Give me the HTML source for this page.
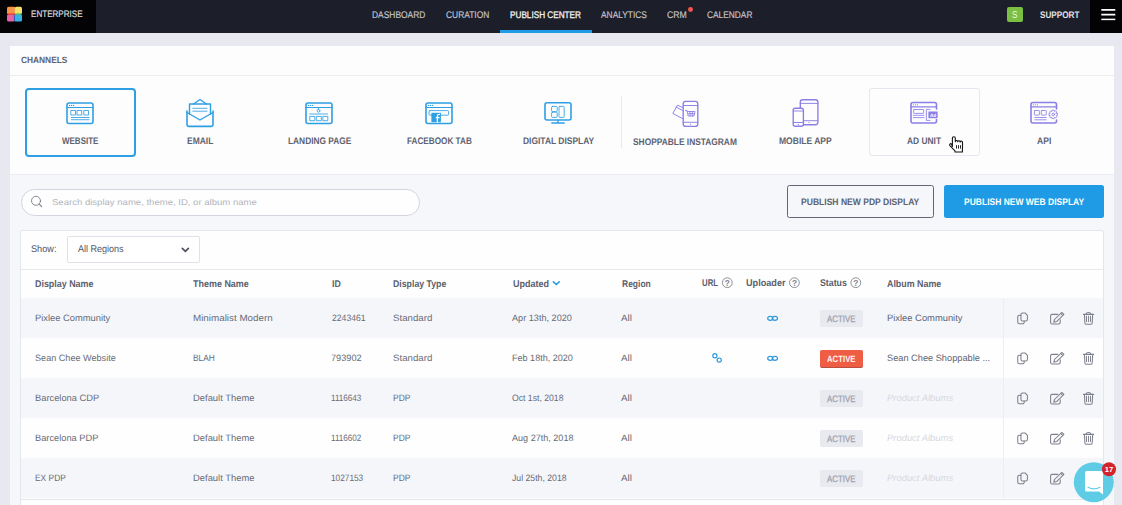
<!DOCTYPE html>
<html><head><meta charset="utf-8">
<style>
*{margin:0;padding:0;box-sizing:border-box}
html,body{width:1122px;height:505px;overflow:hidden;background:#e8e9f0;font-family:"Liberation Sans",sans-serif;color:#5b6070}
.a{position:absolute}
.t{white-space:nowrap;transform-origin:0 0;text-rendering:geometricPrecision}
.row{left:21px;width:1082px;height:40px}
.badge{width:43px;height:17px;border-radius:2px}
</style></head><body>
<svg width="0" height="0" style="position:absolute">
<defs>
<g id="acts" fill="none" stroke="#7d808b" stroke-width="1.05" stroke-linejoin="round" stroke-linecap="round">
<path d="M1022.45 312.9 H1025 L1027.4 315.3 V319.4 a1.5 1.5 0 0 1 -1.5 1.5 H1022.45 a1.5 1.5 0 0 1 -1.5 -1.5 V314.4 a1.5 1.5 0 0 1 1.5 -1.5 Z"/>
<path d="M1020.95 315.2 H1019.25 a1.5 1.5 0 0 0 -1.5 1.5 V322.3 a1.5 1.5 0 0 0 1.5 1.5 H1022.7 a1.5 1.5 0 0 0 1.5 -1.5 V320.9"/>
<path d="M1057.7 314.35 H1052.1 a1.5 1.5 0 0 0 -1.5 1.5 V322.5 a1.5 1.5 0 0 0 1.5 1.5 H1058.7 a1.5 1.5 0 0 0 1.5 -1.5 V319.7"/>
<path d="M1053.8 322.2 L1054.5 319.5 L1061.8 312.3 L1063.9 314.4 L1056.6 321.6 Z M1060.7 313.5 L1062.8 315.6"/>
<path d="M1083.4 314.35 H1093.7"/>
<path d="M1086 314.2 Q1086.4 312.4 1088.5 312.4 Q1090.6 312.4 1091 314.2"/>
<path d="M1084.45 314.5 L1084.9 323 a1.2 1.2 0 0 0 1.2 1.2 H1091 a1.2 1.2 0 0 0 1.2 -1.2 L1092.65 314.5"/>
<path d="M1086.5 316.3 V321.6 M1088.5 316.3 V321.6 M1090.5 316.3 V321.6" stroke-width="0.95"/>
</g>
</defs></svg>
<div class="a" style="left:0;top:0;width:1122px;height:33px;background:#1c1e2a"></div>
<div class="a" style="left:0;top:0;width:96px;height:33px;background:#030305"></div>
<div class="a" style="left:1090px;top:0;width:32px;height:33px;background:#030305"></div>
<svg class="a" style="left:0;top:0" width="30" height="30" viewBox="0 0 30 30">
<rect x="7" y="6.8" width="8.6" height="7.6" rx="1.6" fill="#f59447"/>
<rect x="14.8" y="6.8" width="7.2" height="7.4" rx="1.6" fill="#f5e06e"/>
<rect x="7" y="14.2" width="7.8" height="7.4" rx="1.6" fill="#e664a6"/>
<rect x="14.2" y="14" width="7.8" height="7.6" rx="1.6" fill="#35b3e6"/>
<rect x="8" y="13.4" width="6.6" height="1.5" fill="#e8453f"/>
<rect x="15.6" y="13.4" width="5.6" height="1.4" fill="#58bd5e"/>
<rect x="13.9" y="15.2" width="1.1" height="5.6" fill="#3a55b5"/>
</svg>
<div class="a t" style="left:30.70px;top:10px;font-size:9.36px;line-height:9.36px;color:#dadade;transform:scaleX(0.8644);-webkit-text-stroke:0.2px #dadade">ENTERPRISE</div>
<div class="a t" style="left:371.90px;top:11px;font-size:9.64px;line-height:9.64px;color:#c6c7cd;transform:scaleX(0.8744);-webkit-text-stroke:0.15px #c6c7cd">DASHBOARD</div>
<div class="a t" style="left:445.90px;top:11px;font-size:9.64px;line-height:9.64px;color:#c6c7cd;transform:scaleX(0.8725);-webkit-text-stroke:0.15px #c6c7cd">CURATION</div>
<div class="a t" style="left:510.00px;top:11px;font-size:9.50px;line-height:9.50px;color:#f2f2f4;transform:scaleX(0.8621);-webkit-text-stroke:0.3px #f2f2f4">PUBLISH CENTER</div>
<div class="a" style="left:499.5px;top:29.5px;width:92.5px;height:3.5px;background:#1e9be4"></div>
<div class="a t" style="left:601.00px;top:11px;font-size:9.64px;line-height:9.64px;color:#c6c7cd;transform:scaleX(0.8703);-webkit-text-stroke:0.15px #c6c7cd">ANALYTICS</div>
<div class="a t" style="left:667.40px;top:11px;font-size:9.64px;line-height:9.64px;color:#c6c7cd;transform:scaleX(0.9066);-webkit-text-stroke:0.15px #c6c7cd">CRM</div>
<div class="a" style="left:688px;top:7px;width:4.8px;height:4.8px;border-radius:50%;background:#f0564a"></div>
<div class="a t" style="left:707.00px;top:11px;font-size:9.64px;line-height:9.64px;color:#c6c7cd;transform:scaleX(0.8667);-webkit-text-stroke:0.15px #c6c7cd">CALENDAR</div>
<div class="a" style="left:1007px;top:7px;width:16px;height:15px;background:#7bc043;border-radius:2px"></div>
<div class="a t" style="left:1012.30px;top:11px;font-size:10.06px;line-height:10.06px;color:#eef7e0;transform:scaleX(0.8048);">S</div>
<div class="a t" style="left:1039.70px;top:11px;font-size:9.50px;line-height:9.50px;font-weight:bold;color:#e2e2e6;transform:scaleX(0.8580);">SUPPORT</div>
<svg class="a" style="left:1100px;top:8px" width="18" height="14" viewBox="1100 8 18 14"><g stroke="#fff" stroke-width="1.7"><path d="M1101.3 9.9 H1115.3 M1101.3 14.7 H1115.3"/><path d="M1101.3 19.4 H1115.3" stroke-width="1.5"/></g></svg>
<div class="a" style="left:10px;top:46px;width:1104px;height:128px;background:#fdfdfd"></div>
<div class="a t" style="left:21.00px;top:56px;font-size:9.08px;line-height:9.08px;font-weight:bold;color:#5d6270;transform:scaleX(0.9198);">CHANNELS</div>
<div class="a" style="left:10px;top:75px;width:1104px;height:1px;background:#ececf1"></div>
<div class="a" style="left:25px;top:88px;width:111px;height:69px;border:2px solid #2d9fe2;border-radius:4px"></div>
<div class="a" style="left:869px;top:88px;width:111px;height:68px;border:1px solid #e5e6ee;border-radius:3px"></div>
<div class="a" style="left:621px;top:96px;width:1px;height:52px;background:#e8e9ef"></div>
<div class="a t" style="left:62.00px;top:137px;font-size:9.50px;line-height:9.50px;font-weight:bold;color:#5d6270;transform:scaleX(0.8410);">WEBSITE</div>
<div class="a t" style="left:186.50px;top:137px;font-size:9.50px;line-height:9.50px;font-weight:bold;color:#5d6270;transform:scaleX(0.8899);">EMAIL</div>
<div class="a t" style="left:287.80px;top:137px;font-size:9.50px;line-height:9.50px;font-weight:bold;color:#5d6270;transform:scaleX(0.8775);">LANDING PAGE</div>
<div class="a t" style="left:406.70px;top:137px;font-size:9.50px;line-height:9.50px;font-weight:bold;color:#5d6270;transform:scaleX(0.8606);">FACEBOOK TAB</div>
<div class="a t" style="left:522.70px;top:137px;font-size:9.50px;line-height:9.50px;font-weight:bold;color:#5d6270;transform:scaleX(0.8894);">DIGITAL DISPLAY</div>
<div class="a t" style="left:633.00px;top:138px;font-size:9.50px;line-height:9.50px;font-weight:bold;color:#5d6270;transform:scaleX(0.8814);">SHOPPABLE INSTAGRAM</div>
<div class="a t" style="left:778.60px;top:137px;font-size:9.50px;line-height:9.50px;font-weight:bold;color:#5d6270;transform:scaleX(0.8968);">MOBILE APP</div>
<div class="a t" style="left:907.10px;top:137px;font-size:9.50px;line-height:9.50px;font-weight:bold;color:#5d6270;transform:scaleX(0.8826);">AD UNIT</div>
<div class="a t" style="left:1036.70px;top:137px;font-size:9.50px;line-height:9.50px;font-weight:bold;color:#5d6270;transform:scaleX(0.9030);">API</div>
<svg class="a" style="left:0;top:0;pointer-events:none" width="1122" height="505" viewBox="0 0 1122 505">
<g fill="none" stroke="#2f9fe3" stroke-linejoin="round" stroke-linecap="round">
 <!-- website -->
 <rect x="67" y="103" width="26" height="20.5" rx="2" stroke-width="1.6"/>
 <path d="M67 107.5 H93" stroke-width="1.2"/>
 <g stroke-width="0.85"><rect x="71.2" y="110.5" width="4.3" height="4.5"/><rect x="77.4" y="110.5" width="4.3" height="4.5"/><rect x="84.2" y="110.5" width="4.3" height="4.5"/>
 <path d="M71.4 117.5 H89 M71.4 119.7 H89"/></g>
 <!-- email -->
 <path d="M187 111 V124.8 a1.6 1.6 0 0 0 1.6 1.6 H211.4 a1.6 1.6 0 0 0 1.6 -1.6 V111" stroke-width="1.6"/>
 <path d="M187 112.5 L200 120 L213 112.5" stroke-width="1.35"/>
 <path d="M189.5 114 V104 H210.5 V114" stroke-width="1.4"/>
 <path d="M193.5 104 L200 99.5 L206.5 104" stroke-width="1.4"/>
 <path d="M192.8 108.3 H207 M192.8 111.2 H207" stroke-width="0.85"/>
 <!-- landing -->
 <rect x="306" y="103" width="26" height="20.5" rx="2" stroke-width="1.6"/>
 <path d="M306 107.5 H332" stroke-width="1.2"/>
 <g stroke-width="0.85"><circle cx="318.5" cy="110.8" r="1.4"/><path d="M318.5 107.5 V109.4 M309.8 114 H327.6"/>
 <rect x="310.2" y="116.4" width="4.6" height="4.3"/><rect x="316.7" y="116.4" width="4.6" height="4.3"/><rect x="323.2" y="116.4" width="4.6" height="4.3"/></g>
 <!-- facebook -->
 <rect x="426" y="103" width="26" height="20.5" rx="2" stroke-width="1.6"/>
 <path d="M426 107.5 H452" stroke-width="1.2"/>
 <rect x="429" y="110.6" width="19.6" height="4.6" rx="1" stroke-width="0.85"/>
 <!-- digital display -->
 <rect x="545" y="102.8" width="26" height="17.2" rx="2" stroke-width="1.6"/>
 <path d="M558 120.5 V122.5 M551.8 123 H564.2" stroke-width="1.35"/>
 <g stroke-width="0.85"><rect x="551.6" y="106.4" width="5.6" height="5.2" rx="0.8"/><rect x="551.6" y="112.2" width="5.6" height="5.2" rx="0.8"/><rect x="559" y="106.4" width="5.2" height="11" rx="0.8"/></g>
</g>
<!-- fb filled -->
<rect x="431.4" y="112.8" width="9.5" height="9.4" fill="#2f9fe3"/>
<path d="M437.4 122.4 V116.2 Q437.4 114.4 439.2 114.4 H440 M435.8 117.6 H439.6" fill="none" stroke="#fff" stroke-width="1.3"/>
<!-- dots -->
<g fill="#2f9fe3"><circle cx="69.6" cy="105.4" r="0.7"/><circle cx="71.6" cy="105.4" r="0.7"/><circle cx="73.6" cy="105.4" r="0.7"/>
<circle cx="308.6" cy="105.4" r="0.7"/><circle cx="310.6" cy="105.4" r="0.7"/><circle cx="312.6" cy="105.4" r="0.7"/>
<circle cx="428.6" cy="105.4" r="0.7"/><circle cx="430.6" cy="105.4" r="0.7"/><circle cx="432.6" cy="105.4" r="0.7"/></g>

<g fill="none" stroke="#8a7fe6" stroke-linejoin="round" stroke-linecap="round">
 <!-- shoppable -->
 <rect x="683.2" y="101.3" width="14.6" height="25" rx="2.4" stroke-width="1.35"/>
 <path d="M683.2 105.5 H697.8 M683.2 122.3 H697.8" stroke-width="0.95"/>
 <path d="M682.6 107.5 L677.5 105.2 L672.8 113.4 L682.6 118.6" stroke-width="0.95"/>
 <path d="M676 107 L682.6 110.5" stroke-width="0.95"/>
 <path d="M685.5 110.6 H687 L688.2 116 H694 L695 111.5 H687.3 M688.5 113.7 H694.5 M690 111.5 V116 M692.3 111.5 V116" stroke-width="0.9"/>
 <!-- mobile app -->
 <rect x="800.3" y="99.7" width="17.6" height="25" rx="2.4" stroke-width="1.35"/>
 <path d="M800.3 103.4 H817.9 M804 120.7 H817.9" stroke-width="0.95"/>
 <rect x="793.2" y="108.2" width="10.2" height="18" rx="2" fill="#fff" stroke-width="1.35"/>
 <path d="M793.2 111 H803.4 M793.2 122.5 H803.4" stroke-width="0.95"/>
 <!-- ad unit -->
 <path d="M936.5 109 V104.5 a2 2 0 0 0 -2 -2 H913 a2 2 0 0 0 -2 2 V121 a2 2 0 0 0 2 2 H934.5 a2 2 0 0 0 2 -2 V119.5" stroke-width="1.6"/>
 <path d="M911 106.8 H936.5" stroke-width="1.2"/>
 <g stroke-width="0.85"><rect x="913.6" y="109.5" width="10" height="3.9" rx="0.6"/><path d="M913.4 115.3 H924 M913.4 117.6 H924"/>
 <path d="M930 109.4 H926.4 V120.4 H930"/></g>
 <!-- api -->
 <path d="M1056.5 109 V104.5 a2 2 0 0 0 -2 -2 H1033 a2 2 0 0 0 -2 2 V121 a2 2 0 0 0 2 2 H1054.5 a2 2 0 0 0 2 -2 V120" stroke-width="1.6"/>
 <path d="M1031 106.8 H1056.5" stroke-width="1.2"/>
 <g stroke-width="0.85"><rect x="1034.4" y="110.5" width="5" height="4.6" rx="0.6"/><rect x="1041.3" y="110.5" width="5" height="4.6" rx="0.6"/><path d="M1034.8 117.5 H1046.2 M1034.8 119.8 H1046.2"/></g>
 <circle cx="1053.2" cy="114.4" r="1.3" stroke-width="0.9"/>
 <path d="M1056.21 113.05 L1057.40 113.46 L1057.40 115.34 L1056.21 115.75 L1056.28 115.58 L1056.83 116.70 L1055.50 118.03 L1054.38 117.48 L1054.55 117.41 L1054.14 118.60 L1052.26 118.60 L1051.85 117.41 L1052.02 117.48 L1050.90 118.03 L1049.57 116.70 L1050.12 115.58 L1050.19 115.75 L1049.00 115.34 L1049.00 113.46 L1050.19 113.05 L1050.12 113.22 L1049.57 112.10 L1050.90 110.77 L1052.02 111.32 L1051.85 111.39 L1052.26 110.20 L1054.14 110.20 L1054.55 111.39 L1054.38 111.32 L1055.50 110.77 L1056.83 112.10 L1056.28 113.22 Z" stroke-width="0.85"/>
</g>
<g fill="#8a7fe6">
 <circle cx="690.5" cy="124.3" r="0.6"/><circle cx="809" cy="122.5" r="0.6"/><circle cx="798.3" cy="124.4" r="0.6"/>
 <rect x="928.4" y="111.5" width="9.2" height="6.7"/>
 <circle cx="913.4" cy="104.8" r="0.6"/><circle cx="915.4" cy="104.8" r="0.6"/><circle cx="917.4" cy="104.8" r="0.6"/>
 <circle cx="1033.4" cy="104.8" r="0.6"/><circle cx="1035.4" cy="104.8" r="0.6"/><circle cx="1037.4" cy="104.8" r="0.6"/>
</g>
<text x="933" y="116.6" font-family="Liberation Sans" font-weight="bold" font-size="4.6" fill="#fff" text-anchor="middle" text-rendering="geometricPrecision">Ad</text>
</svg>

<div class="a" style="left:10px;top:174px;width:1104px;height:331px;background:#f6f7fb"></div>
<div class="a" style="left:10px;top:173.5px;width:1104px;height:1px;background:#eaecf2"></div>
<div class="a" style="left:20.5px;top:189px;width:399.5px;height:27px;border:1px solid #d2d5de;border-radius:14px;background:#fefefe"></div>
<div class="a t" style="left:52.00px;top:198px;font-size:8.52px;line-height:8.52px;color:#b3b6c0;transform:scaleX(1.1209);">Search display name, theme, ID, or album name</div>
<div class="a" style="left:787px;top:185px;width:147px;height:33px;border:1.3px solid #626773;border-radius:2.5px"></div>
<div class="a t" style="left:801.00px;top:198px;font-size:9.36px;line-height:9.36px;font-weight:bold;color:#5c616d;transform:scaleX(0.9150);">PUBLISH NEW PDP DISPLAY</div>
<div class="a" style="left:944px;top:185px;width:160px;height:33px;background:#1e9be4;border-radius:2.5px"></div>
<div class="a t" style="left:963.70px;top:198px;font-size:9.50px;line-height:9.50px;font-weight:bold;color:#ffffff;transform:scaleX(0.8946);">PUBLISH NEW WEB DISPLAY</div>
<div class="a" style="left:20px;top:229.5px;width:1084px;height:290px;background:#fefefe;border:1px solid #e4e6ed;border-radius:2px"></div>
<div class="a t" style="left:31.00px;top:245px;font-size:9.78px;line-height:9.78px;color:#4f5361;transform:scaleX(0.9382);">Show:</div>
<div class="a" style="left:67px;top:236px;width:133px;height:27px;border:1px solid #e0e2e9;border-radius:2px;background:#fff"></div>
<div class="a t" style="left:78.00px;top:245px;font-size:9.78px;line-height:9.78px;color:#4f5361;transform:scaleX(0.9238);">All Regions</div>
<div class="a" style="left:21px;top:269px;width:1082px;height:1px;background:#e6e8ee"></div>
<div class="a t" style="left:34.60px;top:280px;font-size:9.78px;line-height:9.78px;font-weight:bold;color:#5b5f6c;transform:scaleX(0.9120);">Display Name</div>
<div class="a t" style="left:192.80px;top:280px;font-size:9.78px;line-height:9.78px;font-weight:bold;color:#5b5f6c;transform:scaleX(0.9182);">Theme Name</div>
<div class="a t" style="left:331.60px;top:280px;font-size:9.78px;line-height:9.78px;font-weight:bold;color:#5b5f6c;transform:scaleX(0.8998);">ID</div>
<div class="a t" style="left:392.60px;top:280px;font-size:9.78px;line-height:9.78px;font-weight:bold;color:#5b5f6c;transform:scaleX(0.8958);">Display Type</div>
<div class="a t" style="left:512.80px;top:280px;font-size:9.78px;line-height:9.78px;font-weight:bold;color:#5b5f6c;transform:scaleX(0.9228);">Updated</div>
<div class="a t" style="left:621.70px;top:280px;font-size:9.78px;line-height:9.78px;font-weight:bold;color:#5b5f6c;transform:scaleX(0.8689);">Region</div>
<div class="a t" style="left:701.90px;top:279px;font-size:9.78px;line-height:9.78px;font-weight:bold;color:#5b5f6c;transform:scaleX(0.8011);">URL</div>
<div class="a t" style="left:746.00px;top:279px;font-size:9.78px;line-height:9.78px;font-weight:bold;color:#5b5f6c;transform:scaleX(0.9343);">Uploader</div>
<div class="a t" style="left:819.60px;top:279px;font-size:9.78px;line-height:9.78px;font-weight:bold;color:#5b5f6c;transform:scaleX(0.9000);">Status</div>
<div class="a t" style="left:886.70px;top:280px;font-size:9.78px;line-height:9.78px;font-weight:bold;color:#5b5f6c;transform:scaleX(0.9084);">Album Name</div>
<div class="a row" style="top:298px;background:#f5f6fa"></div>
<div class="a row" style="top:338px;background:#fefefe"></div>
<div class="a row" style="top:378px;background:#f5f6fa"></div>
<div class="a row" style="top:418px;background:#fefefe"></div>
<div class="a row" style="top:458px;background:#f5f6fa"></div>
<div class="a" style="left:21px;top:498.5px;width:1082px;height:1px;background:#e3e5ec"></div>
<div class="a" style="left:1003px;top:298px;width:1px;height:200px;background:#eceef3"></div>
<div class="a t" style="left:34.90px;top:314px;font-size:9.22px;line-height:9.22px;color:#676b77;transform:scaleX(1.0135);">Pixlee Community</div>
<div class="a t" style="left:192.70px;top:314px;font-size:9.22px;line-height:9.22px;color:#676b77;transform:scaleX(1.0655);">Minimalist Modern</div>
<div class="a t" style="left:331.90px;top:314px;font-size:9.22px;line-height:9.22px;color:#676b77;transform:scaleX(0.9361);">2243461</div>
<div class="a t" style="left:392.70px;top:314px;font-size:9.22px;line-height:9.22px;color:#676b77;transform:scaleX(1.0501);">Standard</div>
<div class="a t" style="left:512.10px;top:314px;font-size:9.22px;line-height:9.22px;color:#676b77;transform:scaleX(0.9902);">Apr 13th, 2020</div>
<div class="a t" style="left:621.30px;top:314px;font-size:9.22px;line-height:9.22px;color:#676b77;transform:scaleX(1.0641);">All</div>
<div class="a t" style="left:886.70px;top:314px;font-size:9.22px;line-height:9.22px;color:#5e6372;transform:scaleX(1.0162);">Pixlee Community</div>
<svg class="a" style="left:760px;top:298px" width="25" height="40" viewBox="760 298 25 40"><g fill="none" stroke="#3198d8" stroke-width="1.2"><ellipse cx="770.3" cy="318.3" rx="2.6" ry="2"/><ellipse cx="774.9" cy="318.3" rx="2.6" ry="2"/></g></svg>
<div class="a badge" style="left:820px;top:310.4px;background:#e9eaf0"></div>
<div class="a t" style="left:827.30px;top:315px;font-size:9.22px;line-height:9.22px;color:#9ea1ac;transform:scaleX(0.8558);-webkit-text-stroke:0.25px #9ea1ac">ACTIVE</div>
<svg class="a" style="left:1010px;top:298px" width="90" height="40" viewBox="1010 298 90 40"><use href="#acts"/></svg>
<div class="a t" style="left:34.80px;top:354px;font-size:9.22px;line-height:9.22px;color:#676b77;transform:scaleX(0.9873);">Sean Chee Website</div>
<div class="a t" style="left:193.10px;top:354px;font-size:9.22px;line-height:9.22px;color:#676b77;transform:scaleX(0.9094);">BLAH</div>
<div class="a t" style="left:331.20px;top:354px;font-size:9.22px;line-height:9.22px;color:#676b77;transform:scaleX(0.9946);">793902</div>
<div class="a t" style="left:392.70px;top:354px;font-size:9.22px;line-height:9.22px;color:#676b77;transform:scaleX(1.0501);">Standard</div>
<div class="a t" style="left:512.10px;top:354px;font-size:9.22px;line-height:9.22px;color:#676b77;transform:scaleX(0.9817);">Feb 18th, 2020</div>
<div class="a t" style="left:621.30px;top:354px;font-size:9.22px;line-height:9.22px;color:#676b77;transform:scaleX(1.0641);">All</div>
<div class="a t" style="left:886.70px;top:354px;font-size:9.22px;line-height:9.22px;color:#5e6372;transform:scaleX(1.0006);">Sean Chee Shoppable ...</div>
<svg class="a" style="left:706px;top:338px" width="20" height="40" viewBox="706 338 20 40"><g fill="none" stroke="#3198d8" stroke-width="1.2"><circle cx="714.9" cy="355.8" r="2.1"/><circle cx="719.2" cy="360.1" r="2.1"/></g></svg>
<svg class="a" style="left:760px;top:338px" width="25" height="40" viewBox="760 338 25 40"><g fill="none" stroke="#3198d8" stroke-width="1.2"><ellipse cx="770.3" cy="358.3" rx="2.6" ry="2"/><ellipse cx="774.9" cy="358.3" rx="2.6" ry="2"/></g></svg>
<div class="a badge" style="left:820px;top:350px;background:#f05d45;box-shadow:0 1px 0 #b8503f"></div>
<div class="a t" style="left:827.30px;top:355px;font-size:9.22px;line-height:9.22px;font-weight:bold;color:#fff4f0;transform:scaleX(0.8430);">ACTIVE</div>
<svg class="a" style="left:1010px;top:338px" width="90" height="40" viewBox="1010 298 90 40"><use href="#acts"/></svg>
<div class="a t" style="left:34.80px;top:394px;font-size:9.22px;line-height:9.22px;color:#676b77;transform:scaleX(1.0103);">Barcelona CDP</div>
<div class="a t" style="left:193.10px;top:394px;font-size:9.22px;line-height:9.22px;color:#676b77;transform:scaleX(1.0198);">Default Theme</div>
<div class="a t" style="left:331.20px;top:394px;font-size:9.22px;line-height:9.22px;color:#676b77;transform:scaleX(0.8775);">1116643</div>
<div class="a t" style="left:392.70px;top:394px;font-size:9.22px;line-height:9.22px;color:#676b77;transform:scaleX(0.9232);">PDP</div>
<div class="a t" style="left:512.10px;top:394px;font-size:9.22px;line-height:9.22px;color:#676b77;transform:scaleX(0.9391);">Oct 1st, 2018</div>
<div class="a t" style="left:621.30px;top:394px;font-size:9.22px;line-height:9.22px;color:#676b77;transform:scaleX(1.0641);">All</div>
<div class="a t" style="left:886.90px;top:394px;font-size:9.22px;line-height:9.22px;font-style:italic;color:#d6d8e0;transform:scaleX(1.0210);">Product Albums</div>
<div class="a badge" style="left:820px;top:390.4px;background:#e9eaf0"></div>
<div class="a t" style="left:827.30px;top:395px;font-size:9.22px;line-height:9.22px;color:#9ea1ac;transform:scaleX(0.8558);-webkit-text-stroke:0.25px #9ea1ac">ACTIVE</div>
<svg class="a" style="left:1010px;top:378px" width="90" height="40" viewBox="1010 298 90 40"><use href="#acts"/></svg>
<div class="a t" style="left:34.80px;top:434px;font-size:9.22px;line-height:9.22px;color:#676b77;transform:scaleX(1.0058);">Barcelona PDP</div>
<div class="a t" style="left:193.10px;top:434px;font-size:9.22px;line-height:9.22px;color:#676b77;transform:scaleX(1.0198);">Default Theme</div>
<div class="a t" style="left:331.20px;top:434px;font-size:9.22px;line-height:9.22px;color:#676b77;transform:scaleX(0.8775);">1116602</div>
<div class="a t" style="left:392.70px;top:434px;font-size:9.22px;line-height:9.22px;color:#676b77;transform:scaleX(0.9232);">PDP</div>
<div class="a t" style="left:512.10px;top:434px;font-size:9.22px;line-height:9.22px;color:#676b77;transform:scaleX(0.9832);">Aug 27th, 2018</div>
<div class="a t" style="left:621.30px;top:434px;font-size:9.22px;line-height:9.22px;color:#676b77;transform:scaleX(1.0641);">All</div>
<div class="a t" style="left:886.90px;top:434px;font-size:9.22px;line-height:9.22px;font-style:italic;color:#d6d8e0;transform:scaleX(1.0210);">Product Albums</div>
<div class="a badge" style="left:820px;top:430.4px;background:#e9eaf0"></div>
<div class="a t" style="left:827.30px;top:435px;font-size:9.22px;line-height:9.22px;color:#9ea1ac;transform:scaleX(0.8558);-webkit-text-stroke:0.25px #9ea1ac">ACTIVE</div>
<svg class="a" style="left:1010px;top:418px" width="90" height="40" viewBox="1010 298 90 40"><use href="#acts"/></svg>
<div class="a t" style="left:34.80px;top:474px;font-size:9.22px;line-height:9.22px;color:#676b77;transform:scaleX(0.9107);">EX PDP</div>
<div class="a t" style="left:193.10px;top:474px;font-size:9.22px;line-height:9.22px;color:#676b77;transform:scaleX(1.0198);">Default Theme</div>
<div class="a t" style="left:331.20px;top:474px;font-size:9.22px;line-height:9.22px;color:#676b77;transform:scaleX(0.8971);">1027153</div>
<div class="a t" style="left:392.70px;top:474px;font-size:9.22px;line-height:9.22px;color:#676b77;transform:scaleX(0.9232);">PDP</div>
<div class="a t" style="left:512.10px;top:474px;font-size:9.22px;line-height:9.22px;color:#676b77;transform:scaleX(0.9425);">Jul 25th, 2018</div>
<div class="a t" style="left:621.30px;top:474px;font-size:9.22px;line-height:9.22px;color:#676b77;transform:scaleX(1.0641);">All</div>
<div class="a t" style="left:886.90px;top:474px;font-size:9.22px;line-height:9.22px;font-style:italic;color:#d6d8e0;transform:scaleX(1.0210);">Product Albums</div>
<div class="a badge" style="left:820px;top:470.4px;background:#e9eaf0"></div>
<div class="a t" style="left:827.30px;top:475px;font-size:9.22px;line-height:9.22px;color:#9ea1ac;transform:scaleX(0.8558);-webkit-text-stroke:0.25px #9ea1ac">ACTIVE</div>
<svg class="a" style="left:1010px;top:458px" width="90" height="40" viewBox="1010 298 90 40"><use href="#acts"/></svg>
<!--EXTRA-->
<svg class="a" style="left:0;top:0;pointer-events:none" width="1122" height="505" viewBox="0 0 1122 505">
<g fill="none" stroke="#868994" stroke-linecap="round">
 <circle cx="36" cy="200.8" r="4.5" stroke-width="1"/>
 <path d="M39.3 204.2 L41.6 206.5" stroke-width="1.2"/>
</g>
<path d="M182.3 248.4 L185.4 251.3 L188.4 248.4" fill="none" stroke="#4b4f5d" stroke-width="1.7" stroke-linecap="round" stroke-linejoin="round"/>
<path d="M553.4 281.8 L556.3 284.5 L559.2 281.8" fill="none" stroke="#2d9fe2" stroke-width="1.7" stroke-linecap="round" stroke-linejoin="round"/>
<g fill="none" stroke="#80838d" stroke-width="0.9">
 <circle cx="727.3" cy="282.7" r="4.9"/>
 <circle cx="794.4" cy="282.7" r="4.9"/>
 <circle cx="855.8" cy="282.7" r="4.9"/>
</g>
<g font-family="Liberation Sans" font-size="8.4" font-weight="bold" fill="#858892" text-anchor="middle">
 <text x="727.4" y="285.7">?</text><text x="794.5" y="285.7">?</text><text x="855.9" y="285.7">?</text>
</g>
<!-- cursor -->
<path d="M952.4 146.5 V138.2 a1.45 1.45 0 0 1 2.9 0 V141.6 a1.2 1.2 0 0 1 2.4 0.2 a1.2 1.2 0 0 1 2.4 0.3 a1.2 1.2 0 0 1 2.4 0.6 V147.5 L962.4 150.6 V152 H955 V150.8 L949.9 145.6 a1.15 1.15 0 0 1 1.5 -1.7 Z" fill="#fff" stroke="#111" stroke-width="1.1" stroke-linejoin="round"/>
<path d="M956.5 145.2 V148.6 M958.5 145.2 V148.6 M960.5 145.2 V148.6" stroke="#111" stroke-width="0.9"/>
<!-- chat -->
<circle cx="1093.8" cy="482.2" r="20" fill="#5dcce4"/>
<path d="M1085 472.5 a1.5 1.5 0 0 1 1.5 -1.5 H1101.5 a1.5 1.5 0 0 1 1.5 1.5 V494.5 L1099 491.5 H1086.5 a1.5 1.5 0 0 1 -1.5 -1.5 Z" fill="#fff"/>
<path d="M1088 487.3 Q1094 490.5 1100 487.3" fill="none" stroke="#5dcce4" stroke-width="1.1" stroke-linecap="round"/>
<circle cx="1109" cy="469.2" r="7" fill="#d3242c"/>
<text x="1109" y="472" font-family="Liberation Sans" font-size="7.6" font-weight="bold" fill="#fff" text-anchor="middle">17</text>
</svg>
<!--/EXTRA-->
</body></html>
